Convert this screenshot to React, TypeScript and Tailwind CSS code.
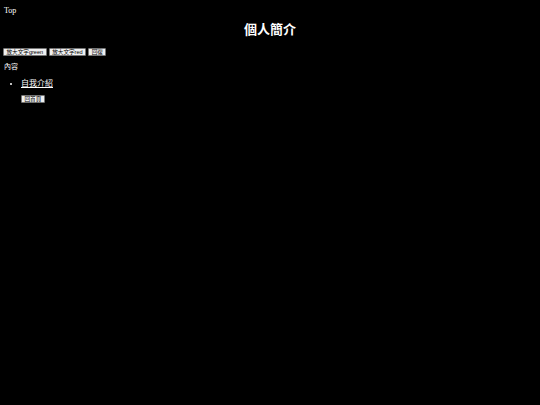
import React from "react";

const serif = { fontFamily: '"Liberation Serif", "Noto Sans CJK TC", serif' };

function Btn({ children }: { children: React.ReactNode }) {
  return (
    <button
      className="bg-[#efefef] text-black border border-[#767676] rounded-[1px] px-[2.5px] h-[8px] leading-[6px] text-[5.6px] mr-[2px] align-top"
      style={{ fontFamily: '"Liberation Sans", "Noto Sans CJK TC", sans-serif' }}
    >
      {children}
    </button>
  );
}

export default function App() {
  return (
    <div className="bg-black text-white w-[540px] min-h-[405px] px-[4px] pt-[6px]" style={serif}>
      <div className="text-[8px] leading-[9px]">Top</div>
      <h1 className="text-[13px] font-bold text-center leading-[16px] mt-[7px]">個人簡介</h1>
      <div className="mt-[10px] flex -ml-[1px]">
        <Btn>放大文字green</Btn>
        <Btn>放大文字red</Btn>
        <Btn>回復</Btn>
      </div>
      <div className="text-[7px] leading-[9px] mt-[7px]">內容</div>
      <ul className="mt-[7px] pl-[17px] list-disc text-[8px] leading-[10px]">
        <li>
          <a className="underline text-white">自我介紹</a>
        </li>
      </ul>
      <div className="pl-[17px] mt-[6px]">
        <Btn>回首頁</Btn>
      </div>
    </div>
  );
}
